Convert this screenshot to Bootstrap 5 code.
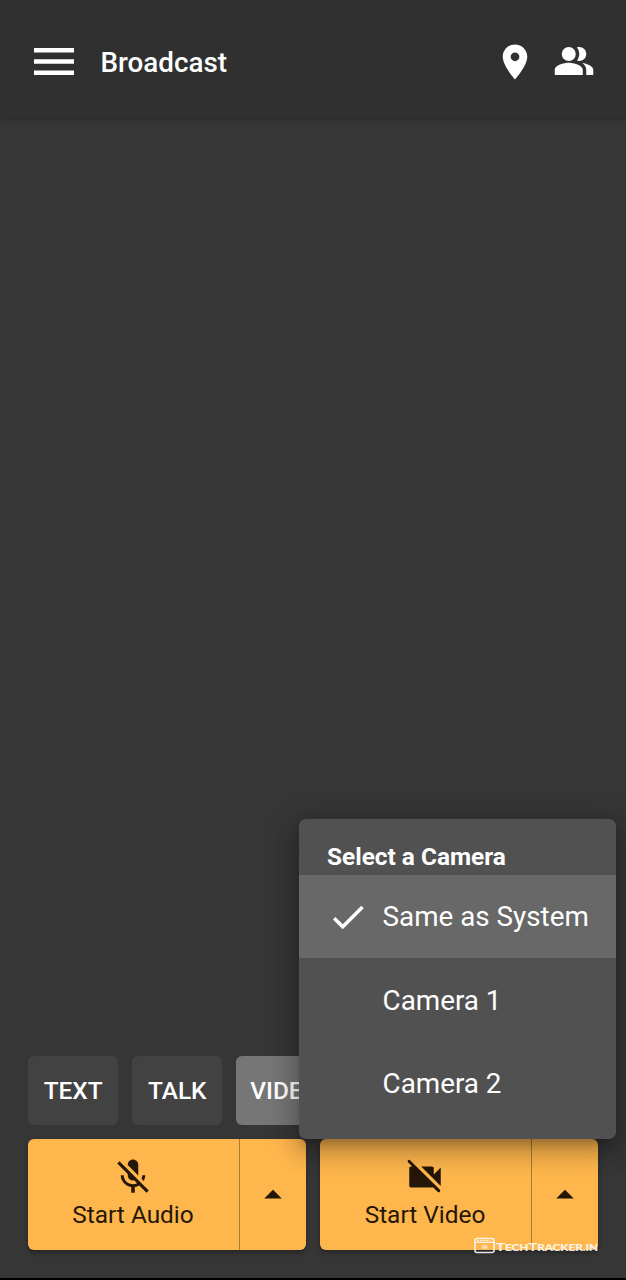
<!DOCTYPE html>
<html lang="en">
<head>
<meta charset="utf-8">
<meta name="viewport" content="width=device-width, initial-scale=1">
<title>Broadcast</title>
<link href="https://cdn.jsdelivr.net/npm/bootstrap@5.3.0/dist/css/bootstrap.min.css" rel="stylesheet">
<style>
  body { font-family: Roboto, "Liberation Sans", sans-serif; background: #363636; color: #fff; }
  svg { display: block; flex: none; }
  .app-screen { height: 1280px; border-bottom: 2px solid #000; }
  .app-header { height: 118px; padding: 6px 31px 0 34px; background: #303030; box-shadow: 0 1px 4px rgba(0,0,0,.3); }
  .app-title { font-size: 27.8px; font-weight: 500; line-height: 32px; margin: 2px 0 0 26.5px; }
  .header-icons { gap: 17px; }
  .bars-icon, .people-icon { margin-top: -2px; }
  .controls { padding: 0 28px 28px; }
  .modes { gap: 14px; margin-bottom: 14px; }
  .mode-btn { --bs-btn-color: #fff; --bs-btn-bg: #424242; --bs-btn-border-width: 0; --bs-btn-border-radius: 6px;
    --bs-btn-padding-x: 0; --bs-btn-padding-y: 0; width: 90.2px; height: 69px; padding-top: 2px; font-size: 24.4px; font-weight: 500; }
  .mode-btn.current { background: #767676; width: 97px; }
  .media-row { gap: 14px; }
  .media-group { flex: 1; height: 111px; border-radius: 6px; box-shadow: 0 3px 5px rgba(0,0,0,.3); }
  .media-btn { --bs-btn-color: #251708; --bs-btn-bg: #ffb74d; --bs-btn-border-width: 0; --bs-btn-border-radius: 6px;
    --bs-btn-padding-x: 0; --bs-btn-padding-y: 0; font-size: 24.4px; line-height: 29px; }
  .media-btn.start { flex: 0 0 213px; border-right: 2px solid #a87930; padding: 17px 1px 0 0; }
  .media-btn.start span { margin-top: 2px; }
  .camera-menu { right: 10px; bottom: 139px; width: 317px; height: 320px; z-index: 5; background: #515151;
    border-radius: 7px; box-shadow: 0 9px 10px -5px rgba(0,0,0,.2), 0 14px 24px 2px rgba(0,0,0,.14), 0 5px 30px 5px rgba(0,0,0,.2); }
  .camera-title { height: 56px; padding: 22px 0 0 28px; font-size: 24.4px; font-weight: 700; line-height: 32px; }
  .camera-item { height: 83.5px; padding: 2px 0 0 28px; font-size: 27.8px; line-height: 42px; }
  .camera-item.chosen { height: 83px; padding-top: 1px; background: #686868; }
  .camera-item .tick { width: 55.6px; flex: none; }
  .site-mark { right: 27px; bottom: 24px; z-index: 6; }
  .site-mark text { font-family: Lato, sans-serif; font-weight: 700; font-size: 12px; }
</style>
</head>
<body>
<div class="app-screen d-flex flex-column position-relative overflow-hidden">
  <header class="app-header d-flex align-items-center">
    <svg class="bars-icon" width="40" height="27" viewBox="3 6 18 12" preserveAspectRatio="none" fill="#fff"><path d="M3 18h18v-2H3v2zm0-5h18v-2H3v2zm0-7v2h18V6H3z"/></svg>
    <h1 class="app-title">Broadcast</h1>
    <div class="header-icons d-flex align-items-center ms-auto">
      <svg width="42" height="42" viewBox="0 0 24 24" fill="#fff"><path d="M12 2C8.13 2 5 5.13 5 9c0 5.25 7 13 7 13s7-7.75 7-13c0-3.87-3.13-7-7-7zm0 9.5a2.5 2.5 0 0 1 0-5 2.5 2.5 0 0 1 0 5z"/></svg>
      <svg class="people-icon" width="42" height="42" viewBox="0 0 24 24" fill="#fff"><path d="M16.67 13.13C18.04 14.06 19 15.32 19 17v3h4v-3c0-2.18-3.57-3.47-6.33-3.87zM15 12c2.21 0 4-1.79 4-4s-1.79-4-4-4c-.47 0-.91.1-1.33.24C14.5 5.27 15 6.58 15 8s-.5 2.73-1.33 3.76c.42.14.86.24 1.33.24zM9 13c-2.67 0-8 1.34-8 4v3h16v-3c0-2.66-5.33-4-8-4z"/><circle cx="9" cy="8" r="4"/></svg>
    </div>
  </header>

  <main class="flex-grow-1"></main>

  <footer class="controls">
    <div class="modes d-flex">
      <button class="btn mode-btn">TEXT</button>
      <button class="btn mode-btn">TALK</button>
      <button class="btn mode-btn current">VIDEO</button>
    </div>
    <div class="media-row d-flex">
      <div class="btn-group media-group">
        <button class="btn media-btn start d-flex flex-column align-items-center">
          <svg width="42" height="42" viewBox="0 0 24 24" fill="currentColor"><path d="M19 11h-1.7c0 .74-.16 1.43-.43 2.05l1.23 1.23c.56-.98.9-2.09.9-3.28zm-4.02.17c0-.06.02-.11.02-.17V5c0-1.66-1.34-3-3-3S9 3.34 9 5v.18l5.98 5.99zM4.27 3L3 4.27l6.01 6.01V11c0 1.66 1.33 3 2.99 3 .22 0 .44-.03.65-.08l1.66 1.66c-.71.33-1.5.52-2.31.52-2.76 0-5.3-2.1-5.3-5.1H5c0 3.41 2.72 6.23 6 6.72V21h2v-3.28c.91-.13 1.77-.45 2.54-.9L19.73 21 21 19.73 4.27 3z"/></svg>
          <span>Start Audio</span>
        </button>
        <button class="btn media-btn d-flex align-items-center justify-content-center" aria-label="Audio source">
          <svg width="42" height="42" viewBox="0 0 24 24" fill="currentColor"><path d="M7 14l5-5 5 5z"/></svg>
        </button>
      </div>
      <div class="btn-group media-group">
        <button class="btn media-btn start d-flex flex-column align-items-center">
          <svg width="42" height="42" viewBox="0 0 24 24" fill="currentColor"><path d="M21 6.5l-4 4V7c0-.55-.45-1-1-1H9.82L21 17.18V6.5zM3.27 2.3Q2.65 1.900 2.2 2.500 1.900 3.100 2.300 3.570L4.73 6H4c-.55 0-1 .45-1 1v10c0 .55.45 1 1 1h12c.21 0 .39-.08.54-.18L19.3 20.570Q19.800 20.900 20.500 20.400 20.900 19.800 20.570 19.300z"/></svg>
          <span>Start Video</span>
        </button>
        <button class="btn media-btn d-flex align-items-center justify-content-center" aria-label="Camera source">
          <svg width="42" height="42" viewBox="0 0 24 24" fill="currentColor"><path d="M7 14l5-5 5 5z"/></svg>
        </button>
      </div>
    </div>
  </footer>

  <div class="camera-menu position-absolute">
    <div class="camera-title">Select a Camera</div>
    <div class="camera-item chosen d-flex align-items-center">
      <span class="tick"><svg width="42" height="42" viewBox="0 0 24 24" fill="#fff"><path d="M9 16.17L4.83 12l-1.42 1.41L9 19 21 7l-1.41-1.41z"/></svg></span>Same as System
    </div>
    <div class="camera-item d-flex align-items-center"><span class="tick"></span>Camera 1</div>
    <div class="camera-item d-flex align-items-center"><span class="tick"></span>Camera 2</div>
  </div>

  <div class="site-mark position-absolute">
    <svg width="126" height="17" viewBox="0 0 126 17" fill="#fff" opacity=".88">
      <rect x="2" y="1.500" width="19" height="14" rx="2" fill="none" stroke="#fff" stroke-width="1.600"/>
      <path d="M2 5.300h19" stroke="#fff" stroke-width="1.300"/>
      <path d="M4 3.500h13" stroke="#fff" stroke-width="1" stroke-dasharray="2 1"/>
      <path d="M8.500 9h6M8.500 11h6" stroke="#fff" stroke-width="1.400" opacity=".7"/>
      <text x="23" y="14.200" textLength="102" lengthAdjust="spacingAndGlyphs" stroke="#fff" stroke-width=".2">T<tspan font-size="9.500">ECH</tspan>T<tspan font-size="9.500">RACKER.IN</tspan></text>
    </svg>
  </div>
</div>
<script src="https://cdn.jsdelivr.net/npm/bootstrap@5.3.0/dist/js/bootstrap.bundle.min.js"></script>
</body>
</html>
